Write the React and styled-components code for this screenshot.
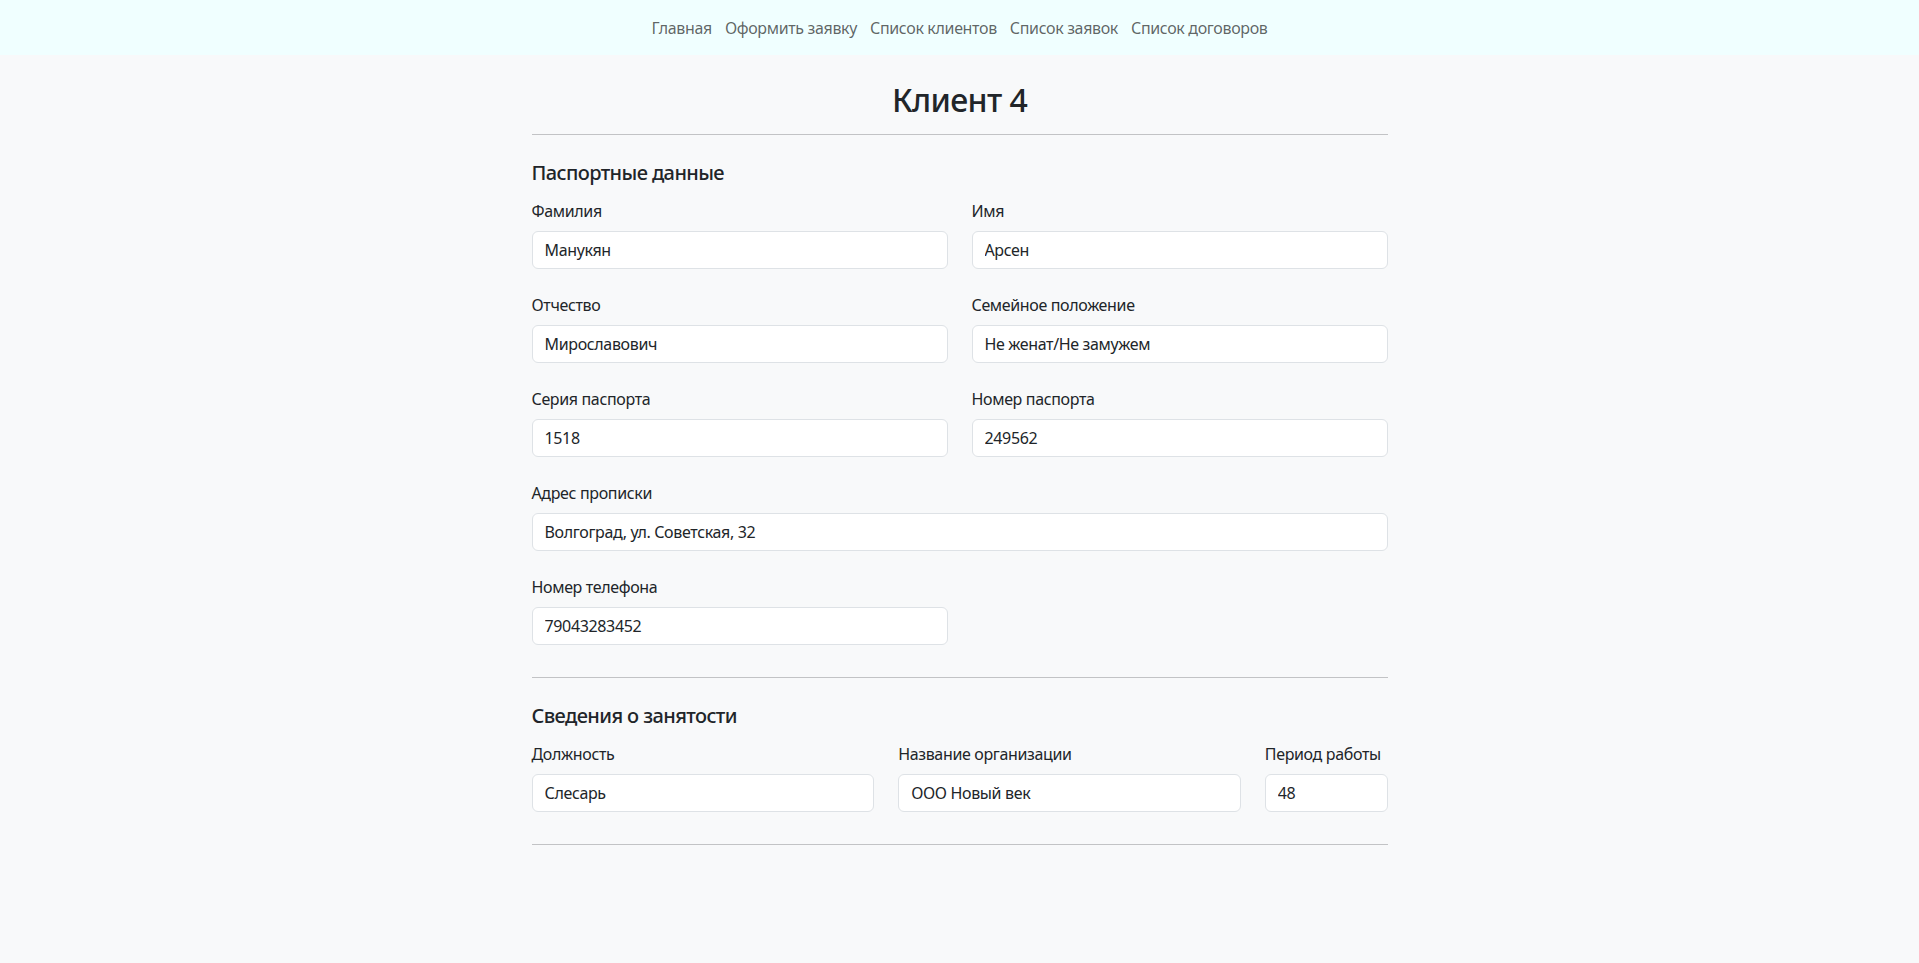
import React from "react";
import styled, { createGlobalStyle } from "styled-components";

const GlobalStyle = createGlobalStyle`
  html, body { margin: 0; padding: 0; }
  body {
    background: #f8f9fa;
    color: #212529;
    font-family: "Noto Sans", "Open Sans", sans-serif;
    font-size: 16px;
    line-height: 1.5;
    letter-spacing: -0.35px;
  }
  * { box-sizing: border-box; }
`;

const NavBar = styled.nav`
  height: 55px;
  background: #f0ffff;
  display: flex;
  align-items: center;
  justify-content: center;
`;

const NavLink = styled.a`
  padding: 0 6.5px;
  color: rgba(0, 0, 0, 0.62);
  text-decoration: none;
  font-size: 16px;
  line-height: 24px;
`;

const Container = styled.main`
  width: 856px;
  margin: 0 auto;
`;

const Title = styled.h2`
  margin: 26px 0 15px;
  text-align: center;
  font-size: 32px;
  font-weight: 500;
  line-height: 38px;
  letter-spacing: -0.6px;
`;

const Rule = styled.hr`
  margin: ${(p) => p.$top || 0}px 0 0;
  border: 0;
  border-top: 1px solid #212529;
  opacity: 0.25;
`;

const SectionTitle = styled.h5`
  margin: 26px 0 14px;
  font-size: 20px;
  font-weight: 500;
  line-height: 24px;
  letter-spacing: -0.6px;
`;

const TwoColGrid = styled.div`
  display: grid;
  grid-template-columns: 1fr 1fr;
  column-gap: 24px;
`;

const WorkGrid = styled.div`
  display: grid;
  grid-template-columns:
    calc((100% + 24px) * 5 / 12 - 24px)
    calc((100% + 24px) * 5 / 12 - 24px)
    1fr;
  column-gap: 24px;
`;

const Field = styled.div`
  display: flex;
  flex-direction: column;
  margin-bottom: 24px;
  grid-column: ${(p) => (p.$wide ? "1 / -1" : "auto")};
`;

const Label = styled.label`
  margin-bottom: 8px;
  font-size: 16px;
  line-height: 24px;
  white-space: nowrap;
`;

const Input = styled.input`
  height: 38px;
  padding: 6px 12px;
  font-family: inherit;
  font-size: 16px;
  line-height: 24px;
  letter-spacing: inherit;
  color: #212529;
  background: #fff;
  border: 1px solid #dee2e6;
  border-radius: 6px;
  outline: none;
  width: 100%;
`;

const links = [
  "Главная",
  "Оформить заявку",
  "Список клиентов",
  "Список заявок",
  "Список договоров",
];

const FormField = ({ label, value, wide }) => (
  <Field $wide={wide}>
    <Label>{label}</Label>
    <Input defaultValue={value} readOnly />
  </Field>
);

export default function App() {
  return (
    <>
      <GlobalStyle />
      <NavBar>
        {links.map((l) => (
          <NavLink key={l} href="#">
            {l}
          </NavLink>
        ))}
      </NavBar>
      <Container>
        <Title>Клиент 4</Title>
        <Rule />
        <SectionTitle>Паспортные данные</SectionTitle>
        <TwoColGrid>
          <FormField label="Фамилия" value="Манукян" />
          <FormField label="Имя" value="Арсен" />
          <FormField label="Отчество" value="Мирославович" />
          <FormField label="Семейное положение" value="Не женат/Не замужем" />
          <FormField label="Серия паспорта" value="1518" />
          <FormField label="Номер паспорта" value="249562" />
          <FormField label="Адрес прописки" value="Волгоград, ул. Советская, 32" wide />
          <FormField label="Номер телефона" value="79043283452" />
        </TwoColGrid>
        <Rule $top={8} />
        <SectionTitle>Сведения о занятости</SectionTitle>
        <WorkGrid>
          <FormField label="Должность" value="Слесарь" />
          <FormField label="Название организации" value="ООО Новый век" />
          <FormField label="Период работы" value="48" />
        </WorkGrid>
        <Rule $top={8} />
      </Container>
    </>
  );
}
